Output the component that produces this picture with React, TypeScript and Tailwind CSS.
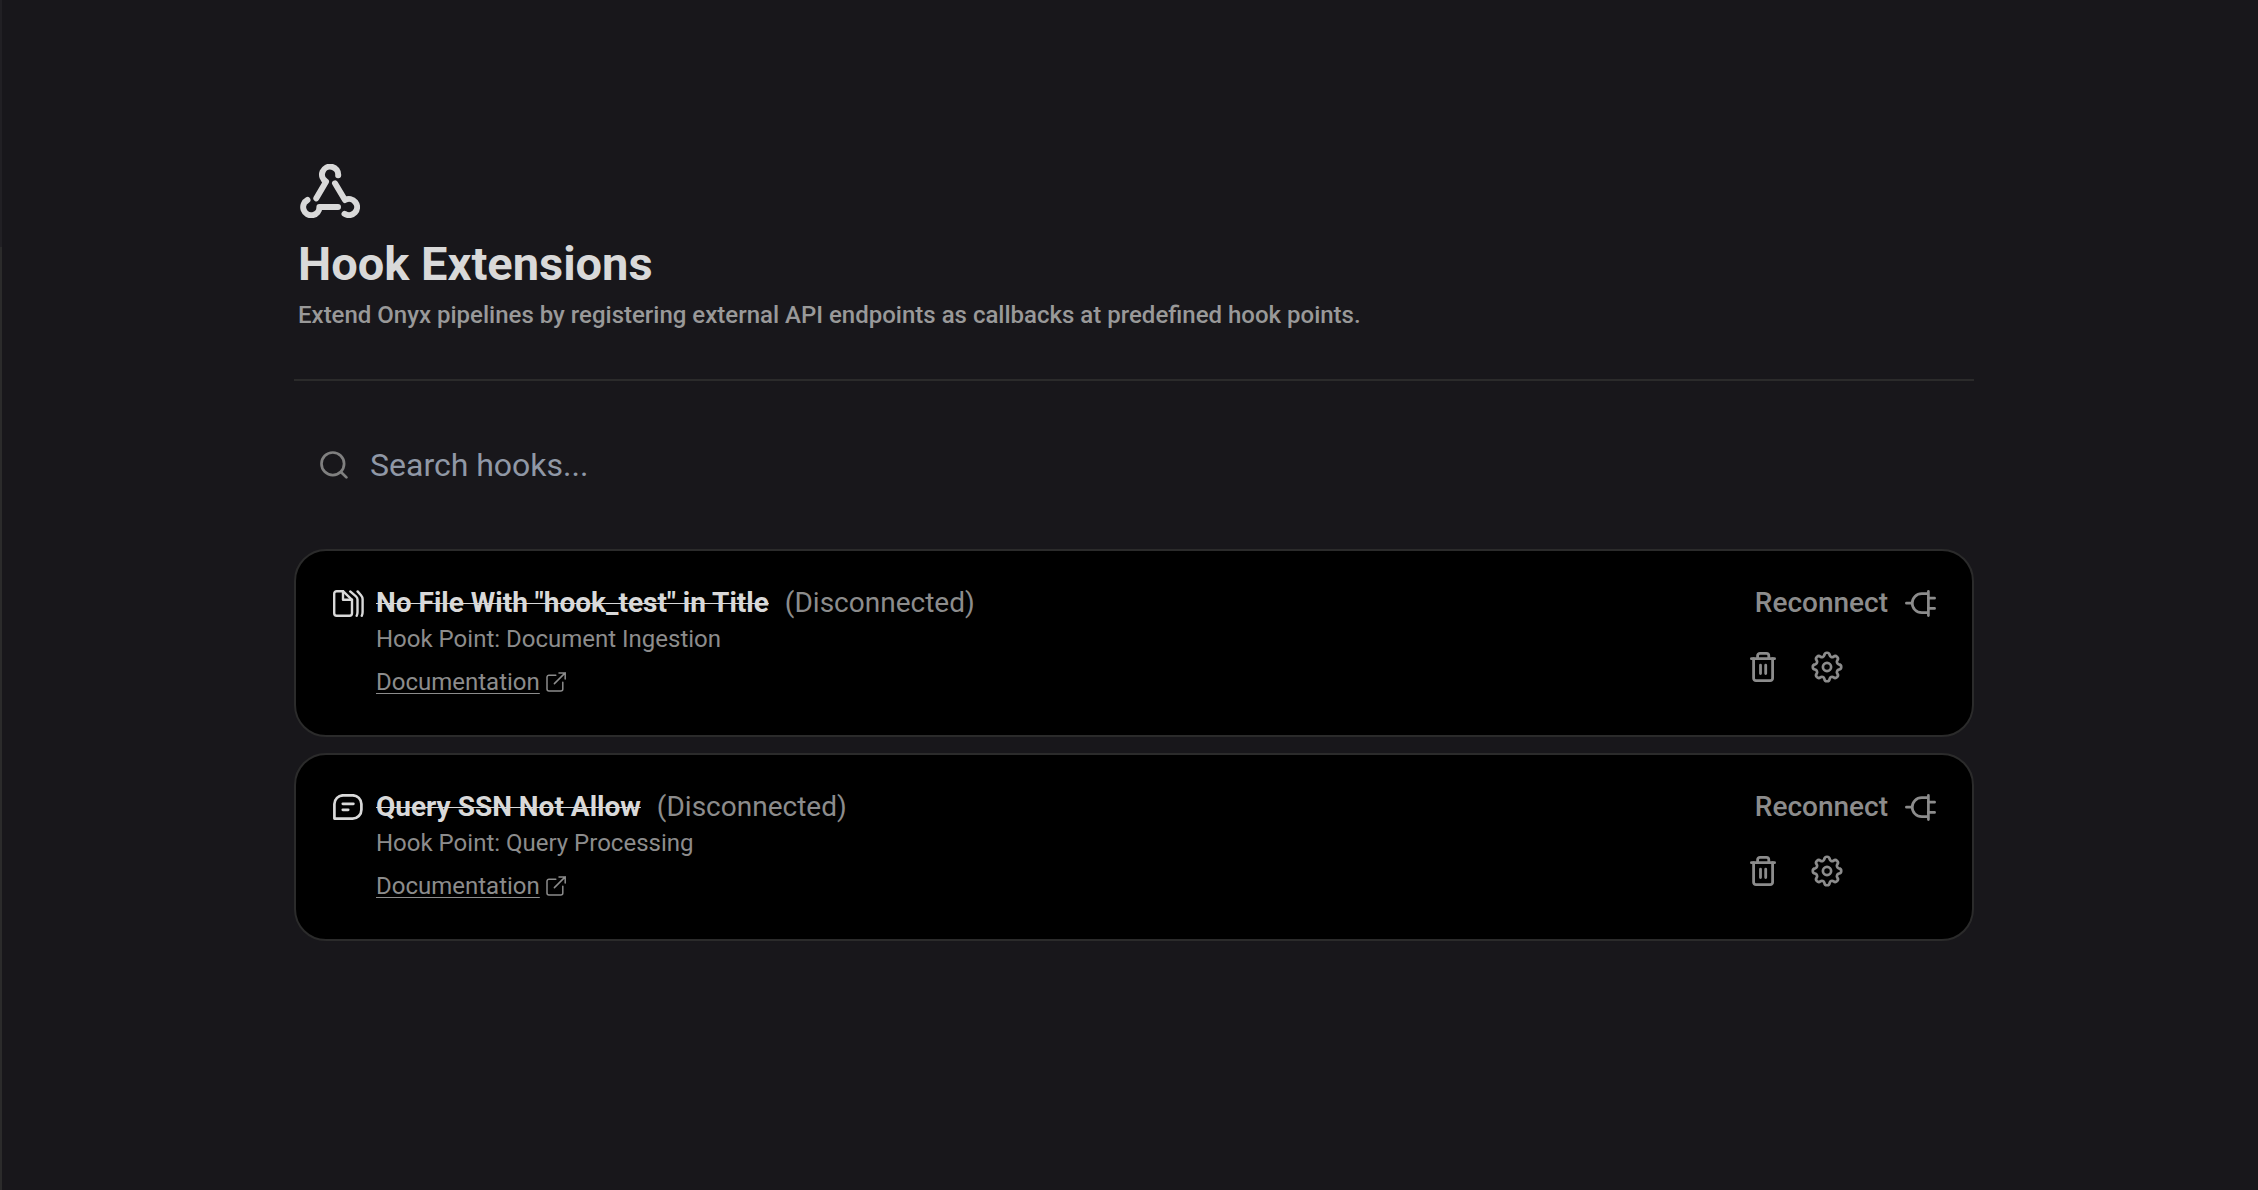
import React, { useState } from "react";

interface Hook {
  id: string;
  name: string;
  point: string;
  icon: React.FC;
}

const WebhookIcon: React.FC = () => (
  <svg width="60" height="54" viewBox="0 0 60 54" fill="none" stroke="currentColor" strokeWidth="6" strokeLinecap="round" strokeLinejoin="round">
    <path d="M38.2 11.3A8.1 8.1 0 1 0 26 17.7L16.3 34.3" />
    <path d="M7.5 36A8.1 8.1 0 1 0 19.4 43H38" />
    <path d="M44.5 49.8A8.1 8.1 0 1 0 45 36L35 19.3" />
  </svg>
);

const SearchIcon: React.FC = () => (
  <svg width="28" height="28" viewBox="0 0 28 28" fill="none" stroke="currentColor" strokeWidth="2.7" strokeLinecap="round">
    <circle cx="12.8" cy="12.8" r="11.3" />
    <path d="M21.2 21.2l5.2 5.2" />
  </svg>
);

const FilesIcon: React.FC = () => (
  <svg width="31" height="27" viewBox="0 0 31 27" fill="none" stroke="currentColor" strokeWidth="2.4" strokeLinecap="round" strokeLinejoin="round">
    <path d="M10 1.2H3.7A2.5 2.5 0 0 0 1.2 3.7v19.6a2.5 2.5 0 0 0 2.5 2.5h12.8a2.5 2.5 0 0 0 2.5-2.5V9.8z" />
    <path d="M10 1.2v8.6h9" />
    <path d="M17.2 1.4l5.8 4.9c1 .9 1.5 1.8 1.5 3.2V22c0 1.6-.2 2.6-.8 3.8" />
    <path d="M24.6 1.4l3.4 3.8c1 1.2 1.6 2.3 1.6 3.8v13c0 1.6-.2 2.6-.8 3.8" />
  </svg>
);

const ChatIcon: React.FC = () => (
  <svg width="30" height="26" viewBox="0 0 30 26" fill="none" stroke="currentColor" strokeWidth="2.7" strokeLinecap="round" strokeLinejoin="round">
    <path d="M1.4 24.6V10.1a8.8 8.8 0 0 1 8.8-8.8h9.4a8.8 8.8 0 0 1 8.8 8.8v5.7a8.8 8.8 0 0 1-8.8 8.8z" />
    <path d="M9.8 9.8h10.6M9.8 15.8h5.4" />
  </svg>
);

const ExternalIcon: React.FC = () => (
  <svg width="20" height="20" viewBox="0 0 20 20" fill="none" stroke="currentColor" strokeWidth="1.5" strokeLinecap="round" strokeLinejoin="round">
    <path d="M9.8 3.2H3a2 2 0 0 0-2 2V17a2 2 0 0 0 2 2h11.8a2 2 0 0 0 2-2v-6.8" />
    <path d="M13 .9h6.2v6.2M8.4 11.6L19.2.9" />
  </svg>
);

const PlugIcon: React.FC = () => (
  <svg width="31" height="27" viewBox="0 0 31 27" fill="none" stroke="currentColor" strokeWidth="2.7" strokeLinecap="round" strokeLinejoin="round">
    <path d="M23.4 1.4v24.2M23.4 3.7h-6.7a9.5 9.5 0 0 0 0 19h6.7" />
    <path d="M1.4 13.2h5.6M23.4 8.2h6.2M23.4 18.4h6.2" />
  </svg>
);

const TrashIcon: React.FC = () => (
  <svg width="26" height="30" viewBox="0 0 26 30" fill="none" stroke="currentColor" strokeWidth="2.8" strokeLinecap="round" strokeLinejoin="round">
    <path d="M1.4 6.7h23.2M7.6 6.7V3.8a2.4 2.4 0 0 1 2.4-2.4h6.4a2.4 2.4 0 0 1 2.4 2.4v2.9" />
    <path d="M3.6 6.7v19.5a2.4 2.4 0 0 0 2.4 2.4h14.2a2.4 2.4 0 0 0 2.4-2.4V6.7" />
    <path d="M10.5 13.2v8.4M15.7 13.2v8.4" />
  </svg>
);

// one round tooth and the valley after it, eight times round the hub
function gearPath() {
  const at = (deg: number) => {
    const a = (deg * Math.PI) / 180;
    return `${(16 + 12.1 * Math.cos(a)).toFixed(2)} ${(16 + 12.1 * Math.sin(a)).toFixed(2)}`;
  };
  let d = `M${at(-12.6)}`;
  for (let i = 0; i < 8; i++) {
    d += `A2.65 2.65 0 0 1 ${at(i * 45 + 12.6)}A2.6 2.6 0 0 0 ${at(i * 45 + 32.4)}`;
  }
  return d + "Z";
}

const GearIcon: React.FC = () => (
  <svg width="32" height="32" viewBox="0 0 32 32" fill="none" stroke="currentColor" strokeWidth="2.7" strokeLinejoin="round">
    <path d={gearPath()} />
    <circle cx="16" cy="16" r="4.1" />
  </svg>
);

const hooks: Hook[] = [
  { id: "ingestion", name: 'No File With "hook_test" in Title', point: "Document Ingestion", icon: FilesIcon },
  { id: "query", name: "Query SSN Not Allow", point: "Query Processing", icon: ChatIcon },
];

const HookCard: React.FC<{ hook: Hook }> = ({ hook }) => {
  const Icon = hook.icon;

  return (
    <article className="flex justify-between min-h-[188px] rounded-[32px] border-2 border-[#2b2b2b] bg-black px-8 py-8">
      {/* Details */}
      <div className="flex gap-3 pl-1">
        <div className="flex h-10 w-8 shrink-0 items-center justify-center text-[#d9d9d9]">
          <Icon />
        </div>
        <div>
          <div className="flex items-center gap-4 text-[28px] leading-10">
            <h2 className="font-bold text-[#d9d9d9] line-through decoration-1">{hook.name}</h2>
            <span className="text-[#8c8c8c]">(Disconnected)</span>
          </div>
          <p className="text-2xl leading-8 text-[#8c8c8c]">Hook Point: {hook.point}</p>
          <a href="#docs" className="mt-[13px] flex w-fit items-center gap-1.5 text-2xl leading-7 text-[#8c8c8c]">
            <span className="underline decoration-1 underline-offset-[3px]">Documentation</span>
            <ExternalIcon />
          </a>
        </div>
      </div>

      {/* Actions */}
      <div className="flex flex-col gap-7 pr-1">
        <button className="flex h-10 items-center gap-[17px] pl-2 text-[28px] leading-10 font-medium text-[#8c8c8c]">
          Reconnect
          <PlugIcon />
        </button>
        <div className="flex items-center gap-8 text-[#8c8c8c]">
          <button aria-label="Delete hook" className="flex size-8 items-center justify-center">
            <TrashIcon />
          </button>
          <button aria-label="Hook settings" className="flex size-8 items-center justify-center">
            <GearIcon />
          </button>
        </div>
      </div>
    </article>
  );
};

const App: React.FC = () => {
  const [query, setQuery] = useState("");
  const visible = hooks.filter((h) => h.name.toLowerCase().includes(query.toLowerCase()));

  return (
    <div className="flex min-h-screen bg-[#18171b] font-[Roboto,sans-serif]">
      {/* Sidebar edge */}
      <div className="flex w-0.5 flex-col">
        <div className="h-[247px] bg-[#212024]" />
        <div className="grow bg-[#2b2b2b]" />
      </div>

      <main className="grow pt-[164px] pr-4 pl-6">
        <div className="mx-auto max-w-[1680px]">
          {/* Header */}
          <header className="border-b-2 border-[#2b2b2b] px-1 pb-12 text-[#d9d9d9]">
            <div className="pl-0.5">
              <WebhookIcon />
            </div>
            <h1 className="mt-4 text-[47px] leading-[60px] font-bold">Hook Extensions</h1>
            <p className="mt-[5px] text-2xl leading-8 font-medium text-[#999999]">
              Extend Onyx pipelines by registering external API endpoints as callbacks at predefined hook points.
            </p>
          </header>

          {/* Search */}
          <label className="mt-12 flex h-[72px] items-center gap-[22px] px-[26px] text-[#808080]">
            <SearchIcon />
            <input
              type="text"
              aria-label="Search hooks"
              placeholder="Search hooks..."
              value={query}
              onChange={(e) => setQuery(e.target.value)}
              className="grow bg-transparent text-[32px] leading-10 text-[#d9d9d9] outline-none placeholder:text-[#9098a6]"
            />
          </label>

          {/* Hooks */}
          <section className="mt-12 flex flex-col gap-4">
            {visible.map((hook) => (
              <HookCard key={hook.id} hook={hook} />
            ))}
          </section>
        </div>
      </main>
    </div>
  );
};

export default App;
